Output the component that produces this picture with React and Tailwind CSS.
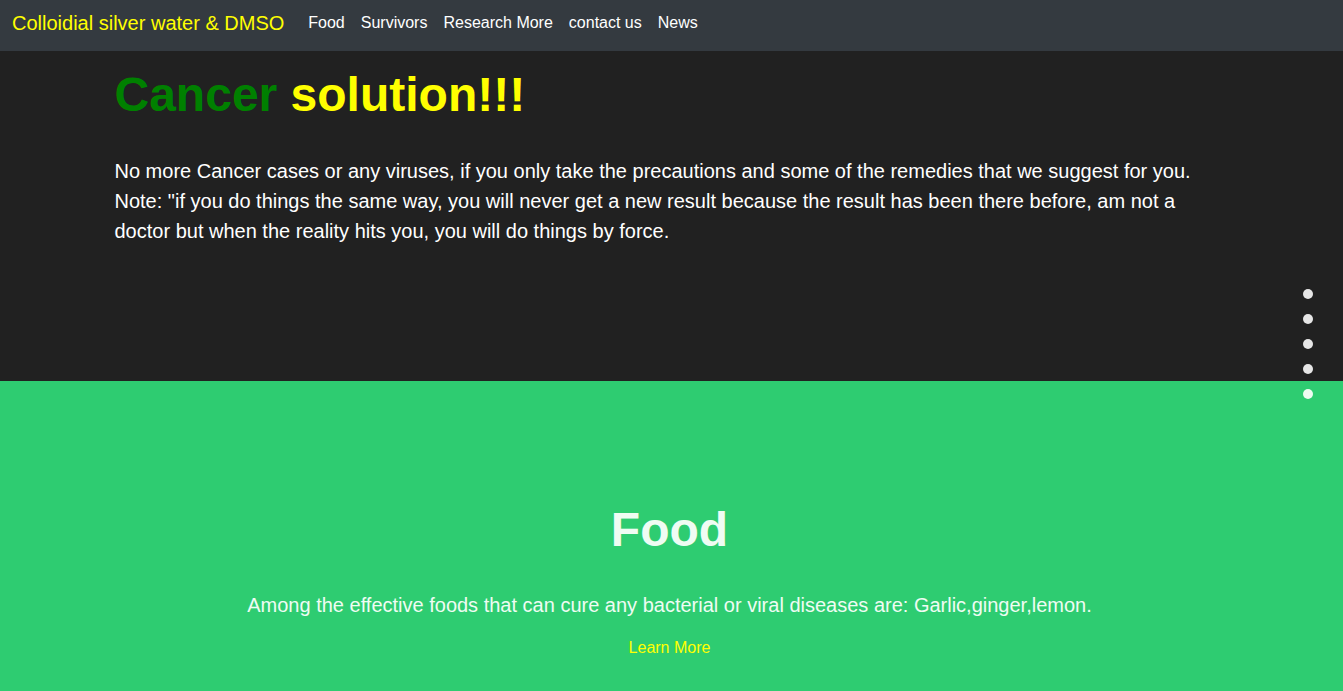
import React from "react";

const links = ["Food", "Survivors", "Research More", "contact us", "News"];

export default function App() {
    return (
        <div className="min-h-screen font-['Liberation_Sans',Arial,sans-serif] bg-[#2ecc71]">
            {/* Navbar */}
            <nav className="h-[51px] bg-[#343a40] flex items-center px-3 pb-[6px]">
                <span className="text-[20px] text-[#ffff00] mr-4 leading-none">Colloidial silver water &amp; DMSO</span>
                <ul className="flex">
                    {links.map((l) => (
                        <li key={l}>
                            <a className="px-2 text-[16px] text-white">{l}</a>
                        </li>
                    ))}
                </ul>
            </nav>

            {/* Intro */}
            <section className="h-[330px] bg-[#212121]">
                <div className="w-[1140px] mx-auto pl-[13px] pr-[15px] pt-[15px]">
                    <h1 className="text-[48px] font-bold leading-[1.2]">
                        <span className="text-[#008000]">Cancer</span>{" "}
                        <span className="text-[#ffff00]">solution!!!</span>
                    </h1>
                    <p className="mt-[32px] text-[20px] leading-[30px] text-white">
                        No more Cancer cases or any viruses, if you only take the precautions and some of the remedies that we suggest for you. Note: "if you do things the same way, you will never get a new result because the result has been there before, am not a doctor but when the reality hits you, you will do things by force.
                    </p>
                </div>
            </section>

            {/* Food */}
            <section className="bg-[#2ecc71] pt-[120px] pb-10 pr-[4px] text-center">
                <h2 className="text-[48px] font-bold leading-[1.2] text-[#effcf3]">Food</h2>
                <p className="mt-[31px] text-[20px] leading-[30px] text-[#effcf3]">
                    Among the effective foods that can cure any bacterial or viral diseases are: Garlic,ginger,lemon.
                </p>
                <a className="inline-block mt-[16px] text-[16px] leading-[24px] text-[#ffff00]">Learn More</a>
            </section>

            {/* Side dots */}
            <div className="fixed right-[30px] top-[289px] flex flex-col gap-[15px]">
                {[0, 1, 2, 3].map((i) => (
                    <span key={i} className="block w-[10px] h-[10px] rounded-full bg-[#e6e6e6]" />
                ))}
                <span className="block w-[10px] h-[10px] rounded-full bg-[#eefcf2]" />
            </div>
        </div>
    );
}
